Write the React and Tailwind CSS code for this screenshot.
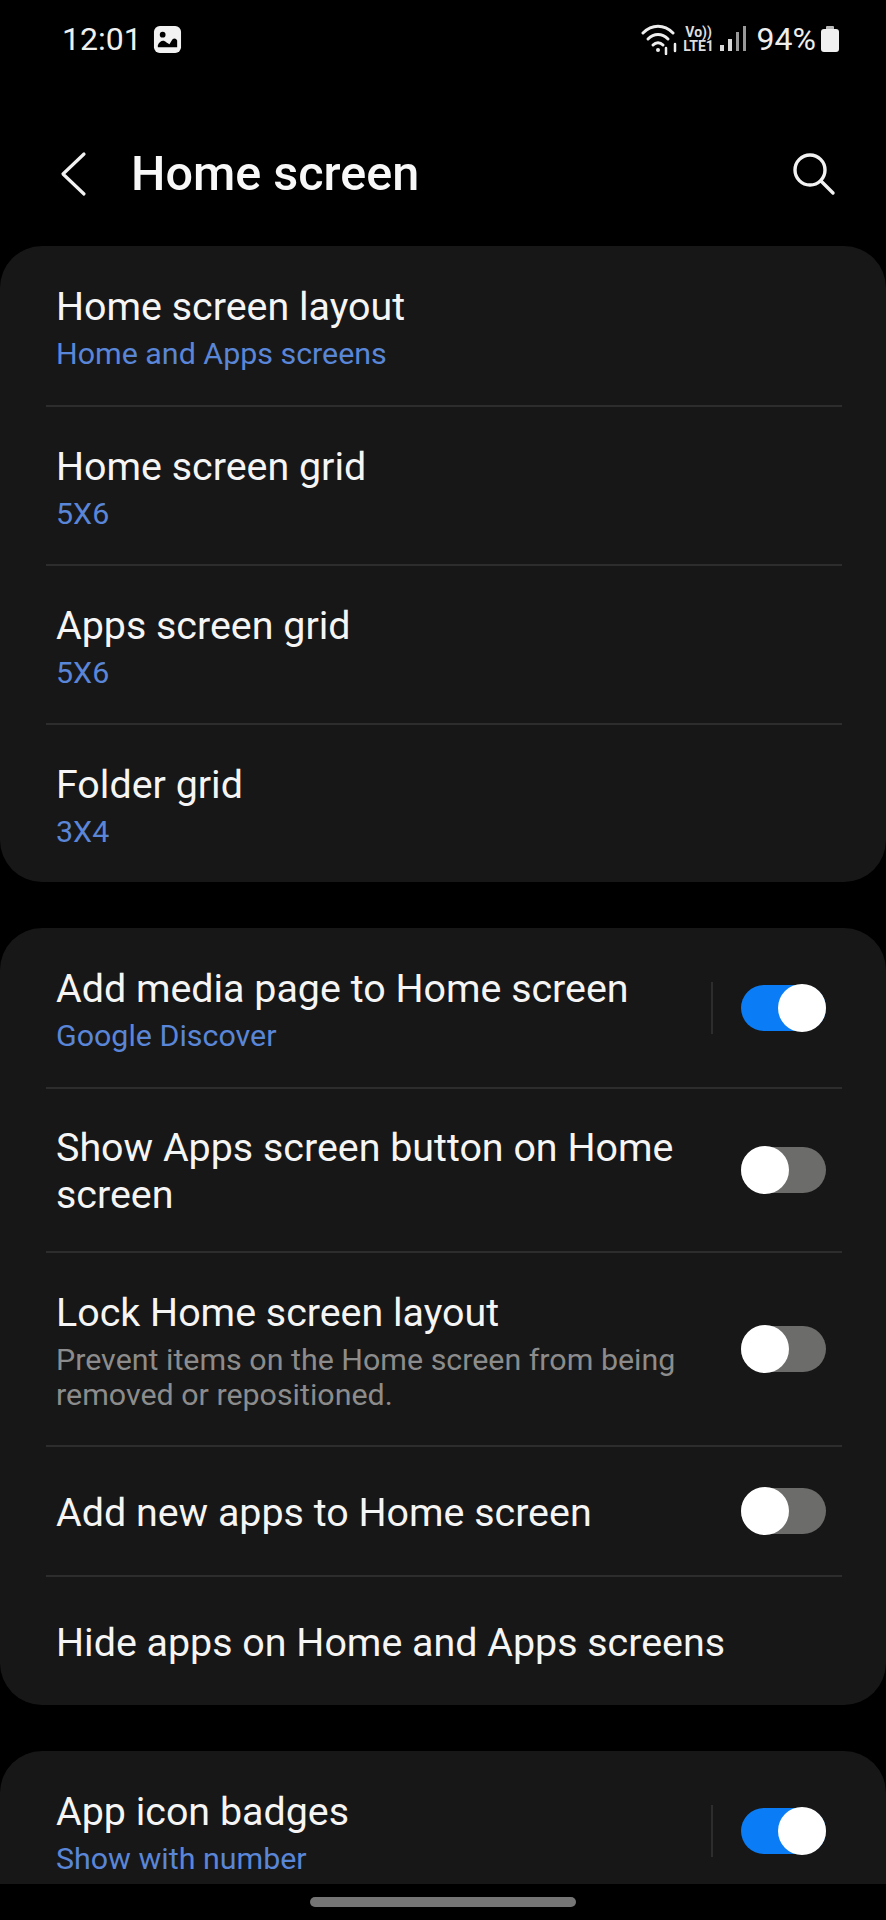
const font = { fontFamily: 'Roboto, "Liberation Sans", sans-serif' };

function Toggle({ on }) {
  return (
    <div className={`relative h-[46px] w-[85px] shrink-0 rounded-full ${on ? "bg-[#0a7cf5]" : "bg-[#6c6c6a]"}`}>
      <div className={`absolute top-[-1px] h-[48px] w-[48px] rounded-full bg-white ${on ? "right-0" : "left-0"}`} />
    </div>
  );
}

function Row({ title, sub, muted, toggle, divider, last, className }) {
  return (
    <div className={`ml-[46px] mr-[44px] flex items-center pl-[10px] pr-[16px] ${last ? "" : "border-b-2 border-[#2d2d2d]"} ${className}`}>
      <div className="min-w-0 flex-1 pt-[2px]">
        <div className="whitespace-nowrap text-[39.4px] leading-[47px] text-[#f5f5f5]">{title}</div>
        {sub && (
          <div className={`mt-[6px] whitespace-nowrap text-[30.4px] leading-[35px] ${muted ? "text-[#8c8c8c]" : "text-[#5a86d8]"}`}>{sub}</div>
        )}
      </div>
      {divider && <div className="mr-[28px] h-[52px] w-[2px] shrink-0 bg-[#2d2d2d]" />}
      {toggle !== undefined && <Toggle on={toggle} />}
    </div>
  );
}

function PictureIcon() {
  return (
    <svg width="29" height="29" viewBox="0 0 30 30" className="ml-[11px]">
      <rect x="1" y="1" width="28" height="28" rx="6" fill="#f2f2f2" />
      <circle cx="10" cy="10" r="3" fill="#000" />
      <path d="M5 23 L5 21 C7 16 11 15 14 18 L17 20 L20 15 C22 13 24 14 25 16 L25 23 Z" fill="#000" />
    </svg>
  );
}

function WifiIcon() {
  return (
    <svg width="38" height="32" viewBox="0 0 38 32" fill="none" stroke="#eeeeee" strokeWidth="3" strokeLinecap="round">
      <path d="M2 10 C11 1 23 1 32 10" />
      <path d="M7 16 C13 10 21 10 27 16" />
      <path d="M12 22 C15 19 19 19 22 22" />
      <circle cx="17" cy="27" r="2" fill="#eeeeee" stroke="none" />
      <path d="M25 25 V31 M34 21 V28" strokeWidth="2.5" />
    </svg>
  );
}

function SignalIcon() {
  return (
    <svg width="28" height="26" viewBox="0 0 28 26" fill="#d8d8d8">
      <rect x="0" y="19" width="4" height="6" />
      <rect x="8" y="13" width="4" height="12" />
      <rect x="16" y="6" width="3" height="19" fill="#999999" />
      <rect x="23" y="0" width="3" height="25" fill="#999999" />
    </svg>
  );
}

function BatteryIcon() {
  return (
    <svg width="20" height="26" viewBox="0 0 20 26" className="ml-[4px]">
      <rect x="6" y="0" width="8" height="4" rx="1" fill="#bbbbbb" />
      <rect x="1" y="3" width="18" height="23" rx="3" fill="#f0f0f0" />
    </svg>
  );
}

export default function App() {
  return (
    <div style={font} className="relative h-[1920px] w-[886px] overflow-hidden bg-black text-white">
      <div className="flex h-[78px] items-center justify-between pl-[62px] pr-[46px]">
        <div className="flex items-center">
          <span className="text-[32px] leading-[40px] text-[#f0f0f0]">12:01</span>
          <PictureIcon />
        </div>
        <div className="flex items-center">
          <WifiIcon />
          <div className="ml-[4px] mr-[5px] flex w-[32px] flex-col items-center text-[14px] font-bold leading-[14px] text-[#dddddd]">
            <span>Vo))</span>
            <span>LTE1</span>
          </div>
          <SignalIcon />
          <span className="ml-[9px] text-[32px] leading-[40px] text-[#eeeeee]">94%</span>
          <BatteryIcon />
        </div>
      </div>

      <div className="flex h-[168px] items-center justify-between pl-[60px] pr-[50px] pt-[24px]">
        <div className="flex items-center">
          <svg width="28" height="46" viewBox="0 0 28 46" fill="none" stroke="#f2f2f2" strokeWidth="3.2" strokeLinecap="round" strokeLinejoin="round">
            <path d="M24 3 L3 23 L24 43" />
          </svg>
          <span className="ml-[43px] whitespace-nowrap text-[48.5px] font-medium leading-[56px] text-[#f8f8f8]">Home screen</span>
        </div>
        <svg width="44" height="44" viewBox="0 0 44 44" fill="none" stroke="#f2f2f2" strokeWidth="3.4" strokeLinecap="round">
          <circle cx="18" cy="18" r="15" />
          <path d="M29 29 L41 41" />
        </svg>
      </div>

      <div className="h-[636px] overflow-hidden rounded-[42px] bg-[#171717]">
        <Row className="h-[161px]" title="Home screen layout" sub="Home and Apps screens" />
        <Row className="h-[159px]" title="Home screen grid" sub="5X6" />
        <Row className="h-[159px]" title="Apps screen grid" sub="5X6" />
        <Row className="h-[157px]" title="Folder grid" sub="3X4" last />
      </div>

      <div className="mt-[46px] h-[777px] overflow-hidden rounded-[42px] bg-[#171717]">
        <Row className="h-[161px]" title="Add media page to Home screen" sub="Google Discover" toggle={true} divider />
        <Row className="h-[164px]" title={<>Show Apps screen button on Home<br />screen</>} toggle={false} />
        <Row className="h-[194px]" title="Lock Home screen layout" sub={<>Prevent items on the Home screen from being<br />removed or repositioned.</>} muted toggle={false} />
        <Row className="h-[130px]" title="Add new apps to Home screen" toggle={false} />
        <Row className="h-[128px]" title="Hide apps on Home and Apps screens" last />
      </div>

      <div className="mt-[46px] h-[133px] overflow-hidden rounded-t-[42px] bg-[#171717]">
        <Row className="h-[133px] pt-[26px]" title="App icon badges" sub="Show with number" toggle={true} divider last />
      </div>

      <div className="flex h-[35px] items-center justify-center">
        <div className="h-[10px] w-[266px] rounded-full bg-[#757575]" />
      </div>
    </div>
  );
}
